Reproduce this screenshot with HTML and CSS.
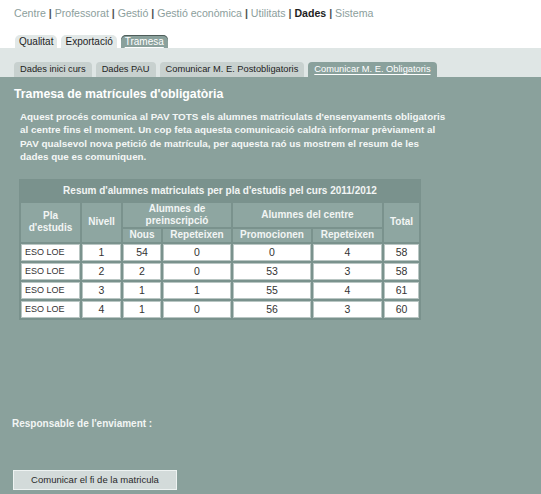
FILE: index.html
```html
<!DOCTYPE html>
<html>
<head>
<meta charset="utf-8">
<link rel="stylesheet" href="styles.css">
</head>
<body>
<div class="topnav">
  <span class="lnk">Centre</span><span class="sep"> | </span><span class="lnk">Professorat</span><span class="sep"> | </span><span class="lnk">Gestió</span><span class="sep"> | </span><span class="lnk">Gestió econòmica</span><span class="sep"> | </span><span class="lnk">Utilitats</span><span class="sep"> | </span><span class="cur">Dades</span><span class="sep"> | </span><span class="lnk">Sistema</span>
</div>
<div class="tabs1">
  <div class="tab1">Qualitat</div>
  <div class="tab1">Exportació</div>
  <div class="tab1 active"><span>Tramesa</span></div>
</div>
<div class="band">
  <div class="tabs2">
    <div class="tab2">Dades inici curs</div>
    <div class="tab2">Dades PAU</div>
    <div class="tab2">Comunicar M. E. Postobligatoris</div>
    <div class="tab2 active"><span>Comunicar M. E. Obligatoris</span></div>
  </div>
</div>
<div class="main">
  <h1 class="title">Tramesa de matrícules d'obligatòria</h1>
  <p class="intro">Aquest procés comunica al PAV TOTS els alumnes matriculats d'ensenyaments obligatoris al centre fins el moment. Un cop feta aquesta comunicació caldrà informar prèviament al PAV qualsevol nova petició de matrícula, per aquesta raó us mostrem el resum de les dades que es comuniquen.</p>
  <table class="resum">
    <colgroup>
      <col class="c1"><col class="c2"><col class="c3"><col class="c4"><col class="c5"><col class="c6"><col class="c7">
    </colgroup>
    <tr class="r-title"><th colspan="7" class="cap">Resum d'alumnes matriculats per pla d'estudis pel curs 2011/2012</th></tr>
    <tr class="r-h1">
      <th rowspan="2">Pla<br>d'estudis</th>
      <th rowspan="2">Nivell</th>
      <th colspan="2">Alumnes de<br>preinscripció</th>
      <th colspan="2">Alumnes del centre</th>
      <th rowspan="2">Total</th>
    </tr>
    <tr class="r-h2">
      <th>Nous</th><th>Repeteixen</th><th>Promocionen</th><th>Repeteixen</th>
    </tr>
    <tr class="r-d"><td class="pla">ESO LOE</td><td>1</td><td>54</td><td>0</td><td>0</td><td>4</td><td>58</td></tr>
    <tr class="r-d"><td class="pla">ESO LOE</td><td>2</td><td>2</td><td>0</td><td>53</td><td>3</td><td>58</td></tr>
    <tr class="r-d"><td class="pla">ESO LOE</td><td>3</td><td>1</td><td>1</td><td>55</td><td>4</td><td>61</td></tr>
    <tr class="r-d"><td class="pla">ESO LOE</td><td>4</td><td>1</td><td>0</td><td>56</td><td>3</td><td>60</td></tr>
  </table>
  <div class="resp">Responsable de l'enviament :</div>
  <button class="btn">Comunicar el fi de la matricula</button>
</div>
</body>
</html>
```
FILE: styles.css
```css
html, body {
  margin: 0;
  padding: 0;
  background: #ffffff;
  font-family: "Liberation Sans", Arial, sans-serif;
}
.topnav {
  height: 26px;
  line-height: 26px;
  padding-left: 14px;
  font-size: 10.6px;
  white-space: nowrap;
}
.topnav .lnk { color: #8c9e9c; }
.topnav .sep { color: #4a4f4f; font-weight: bold; }
.topnav .cur { color: #1e1e1e; font-weight: bold; }

.tabs1 {
  display: flex;
  gap: 4px;
  padding-left: 15px;
  margin-top: 9px;
}
.tab1 {
  height: 13px;
  line-height: 13px;
  padding: 0 4px;
  font-size: 10px;
  color: #1e1e1e;
  background: #e2e8e7;
  border-radius: 5px 5px 0 0;
}
.tab1.active {
  background: #8aa19c;
  color: #ffffff;
  box-shadow: inset 0 1px 0 #4f5d5a;
}
.tab1.active span, .tab2.active span {
  text-decoration: underline;
  text-underline-offset: 2px;
}
.band {
  background: #dfe6e5;
  padding-top: 14px;
}
.tabs2 {
  display: flex;
  gap: 4px;
  padding-left: 14px;
}
.tab2 {
  height: 15px;
  line-height: 15px;
  padding: 0 6px;
  font-size: 9.3px;
  color: #1e1e1e;
  background: #c8d1cf;
  border-radius: 4px 4px 0 0;
}
.tab2.active {
  background: #8aa19c;
  color: #ffffff;
}
.main {
  background: #8aa19c;
  min-height: calc(100vh - 77px);
  padding: 10px 0 5px 0;
  box-sizing: border-box;
}
.title {
  margin: 0 0 0 14px;
  font-size: 12.3px;
  line-height: 14px;
  font-weight: bold;
  color: #ffffff;
}
.intro {
  margin: 9px 0 0 20px;
  width: 428px;
  font-size: 9.85px;
  line-height: 13.4px;
  font-weight: bold;
  color: #f4f7f6;
}
.resum {
  margin: 15px 0 0 19px;
  border-collapse: separate;
  border-spacing: 2px;
  background: #7a928d;
  table-layout: fixed;
  width: 402px;
}
.c1 { width: 59px; }
.c2 { width: 39px; }
.c3 { width: 38px; }
.c4 { width: 68px; }
.c5 { width: 78px; }
.c6 { width: 69px; }
.c7 { width: 35px; }
.resum th {
  padding: 0;
  font-size: 10px;
  line-height: 12px;
  font-weight: bold;
  color: #f2f5f4;
  background: #8ea6a1;
  text-align: center;
}
.resum th.cap {
  background: #7a928d;
  height: 20px;
}
.r-h1 th { height: 23px; }
.r-h2 th { height: 13px; }
.resum td {
  padding: 0;
  height: 17px;
  background: #ffffff;
  color: #333333;
  font-size: 10.5px;
  text-align: center;
  box-shadow: inset 0 0 0 1px #b9c6c3;
}
.resum td.pla {
  text-align: left;
  padding-left: 4px;
  font-size: 9px;
}
.resp {
  margin: 98px 0 0 12px;
  font-size: 10px;
  line-height: 12px;
  font-weight: bold;
  color: #f2f5f4;
}
.btn {
  display: block;
  margin: 40px 0 0 13px;
  width: 164px;
  height: 20px;
  padding: 0;
  background: #d3dbda;
  border: 1px solid #eef3f2;
  color: #2a2a2a;
  font-family: "Liberation Sans", Arial, sans-serif;
  font-size: 9.5px;
}
```
